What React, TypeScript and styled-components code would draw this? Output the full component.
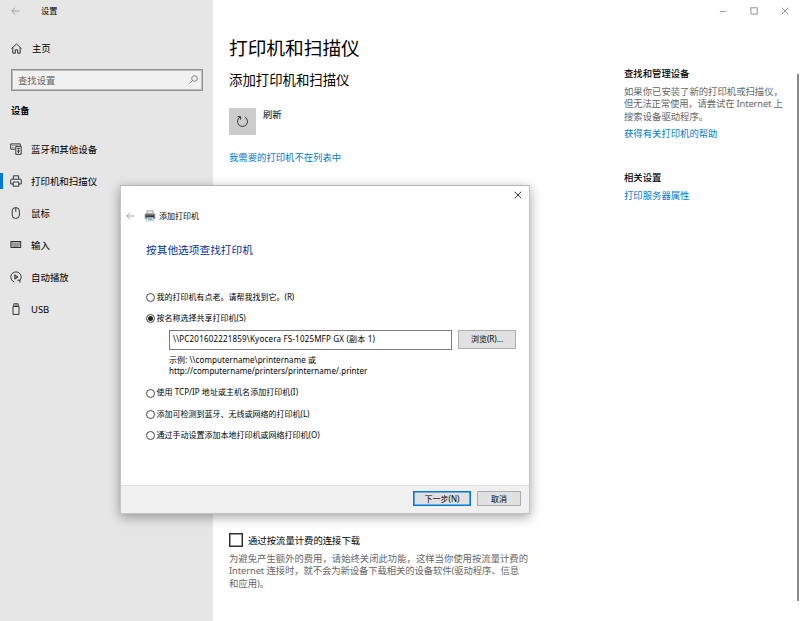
import React from "react";
import styled, { createGlobalStyle } from "styled-components";

const GlobalStyle = createGlobalStyle`
  * { box-sizing: border-box; }
  body {
    margin: 0;
    background: #fff;
    overflow: hidden;
    font-family: "Noto Sans", "Noto Sans CJK SC", sans-serif;
    color: #000;
  }
  p, h1, h2, h3 { margin: 0; font-weight: 400; }
`;

const Window = styled.div`
  position: relative;
  display: flex;
  width: 800px;
  height: 621px;
  overflow: hidden;
`;

/* ---------- sidebar ---------- */
const Sidebar = styled.aside`
  width: 213px;
  flex: none;
  background: #e6e6e6;
`;

const TitleBar = styled.div`
  display: flex;
  align-items: center;
  height: 22px;
  padding-left: 11px;
  gap: 21px;
  font-size: 8.2px;
  line-height: 12px;
`;

const HomeLink = styled.div`
  display: flex;
  align-items: center;
  gap: 10px;
  height: 20px;
  margin: 16px 0 0 11px;
  font-size: 9.35px;
`;

const SearchBox = styled.div`
  display: flex;
  align-items: center;
  justify-content: space-between;
  width: 192px;
  height: 22px;
  margin: 11px 0 0 11px;
  padding: 0 4px 1px 6px;
  border: 1px solid #909090;
  box-shadow: inset 0 0 0 1px #bdbdbd;
  background: #f1f1f1;
  font-size: 9.35px;
  color: #666;
`;

const SidebarHeading = styled.h2`
  margin: 12px 0 14px 11px;
  font-size: 9.3px;
  line-height: 16px;
  font-weight: 700;
`;

const NavItem = styled.div<{ $active?: boolean }>`
  display: flex;
  align-items: center;
  height: 32px;
  font-size: 9.45px;
  &::before {
    content: "";
    width: 3px;
    height: 16px;
    margin-right: 7px;
    background: ${(p) => (p.$active ? "#0078d7" : "transparent")};
  }
  svg { margin-right: 9px; }
`;

/* ---------- main area ---------- */
const Main = styled.main`
  flex: 1;
  display: flex;
  flex-direction: column;
`;

const WindowControls = styled.div`
  display: flex;
  justify-content: flex-end;
  gap: 23px;
  height: 22px;
  padding: 7px 11px 0 0;
`;

const Columns = styled.div`
  display: flex;
  flex: 1;
`;

const Content = styled.section`
  width: 395px;
  padding: 12px 0 0 16px;
`;

const PageTitle = styled.h1`
  font-size: 18.7px;
  line-height: 28px;
`;

const Subtitle = styled.h2`
  margin-top: 8px;
  font-size: 13.4px;
  line-height: 20px;
`;

const RefreshRow = styled.div`
  display: flex;
  gap: 7px;
  margin-top: 18px;
  font-size: 9.3px;
  line-height: 14px;
`;

const RefreshButton = styled.div`
  display: flex;
  align-items: center;
  justify-content: center;
  width: 27px;
  height: 27px;
  background: #ccc;
`;

const Link = styled.p`
  font-size: 9.35px;
  line-height: 14px;
  color: #0078d7;
`;

const MissingPrinterLink = styled(Link)`
  margin-top: 16px;
`;

const CheckRow = styled.div`
  display: flex;
  align-items: center;
  gap: 5px;
  height: 14px;
  margin-top: 368px;
  font-size: 9.35px;
`;

const Checkbox = styled.span`
  width: 14px;
  height: 14px;
  border: 1px solid #333;
  box-shadow: inset 0 0 0 0.5px #333;
`;

const Note = styled.p`
  font-size: 9.35px;
  line-height: 12.4px;
  color: #666;
  white-space: nowrap;
`;

const CheckNote = styled(Note)`
  margin-top: 6px;
`;

const Aside = styled.aside`
  width: 174px;
  padding: 45px 0 0 16px;
`;

const AsideTitle = styled.h3`
  font-size: 9.35px;
  line-height: 14px;
  font-weight: 500;
`;

const AsideNote = styled(Note)`
  margin: 5px 0 4px;
`;

const RelatedTitle = styled(AsideTitle)`
  margin: 30px 0 4px;
`;

const Scrollbar = styled.div`
  width: 2px;
  height: 527px;
  margin: 52px 1px 0 auto;
  background: #8a8a8a;
`;

const Run = styled.span<{ $ls: number }>`
  letter-spacing: ${(p) => p.$ls}px;
`;

/* ---------- dialog ---------- */
const Dialog = styled.div`
  position: absolute;
  left: 120px;
  top: 185px;
  width: 410px;
  height: 329px;
  display: flex;
  flex-direction: column;
  background: #fff;
  border: 1px solid #c4c4c4;
  border-top-color: #b5b5b5;
  box-shadow: 0 3px 11px rgba(0, 0, 0, 0.36);
  font-size: 8px;
  line-height: 12px;
  white-space: nowrap;
`;

const DialogClose = styled.div`
  display: flex;
  justify-content: flex-end;
  height: 23px;
  padding: 5px 7px 0 0;
`;

const DialogHeader = styled.div`
  display: flex;
  align-items: center;
  height: 14px;
  padding-left: 5px;
`;

const DialogTitle = styled.span`
  margin-left: 3px;
`;

const DialogHeading = styled.h2`
  margin: 19px 0 0 25px;
  font-size: 10.7px;
  line-height: 16px;
  color: #003399;
`;

const Options = styled.div`
  flex: 1;
  padding: 28px 0 0 25px;
`;

const Option = styled.div`
  display: flex;
  align-items: center;
  gap: 1.5px;
  height: 21.3px;
`;

const Radio = styled.span<{ $checked?: boolean }>`
  display: flex;
  align-items: center;
  justify-content: center;
  width: 9px;
  height: 9px;
  margin-top: 2px;
  border: 1px solid #444;
  border-radius: 50%;
  &::after {
    content: "";
    width: 5px;
    height: 5px;
    border-radius: 50%;
    background: ${(p) => (p.$checked ? "#222" : "transparent")};
  }
`;

const PathRow = styled.div`
  display: flex;
  gap: 6px;
  margin: 1px 0 0 23px;
`;

const PathInput = styled.div`
  width: 283px;
  height: 20px;
  padding: 2px 3px;
  border: 1px solid #7a7a7a;
`;

const Button = styled.div<{ $w: number; $h: number; $primary?: boolean }>`
  display: flex;
  align-items: center;
  justify-content: center;
  width: ${(p) => p.$w}px;
  height: ${(p) => p.$h}px;
  border: 1px solid ${(p) => (p.$primary ? "#0078d7" : "#adadad")};
  box-shadow: ${(p) => (p.$primary ? "inset 0 0 0 0.6px #0078d7" : "none")};
  background: #e1e1e1;
`;

const Example = styled.div`
  margin: 4px 0 5px 23px;
  line-height: 11.5px;
`;

const DialogFooter = styled.div`
  display: flex;
  justify-content: flex-end;
  gap: 6px;
  height: 28px;
  padding: 5px 8px 0 0;
  border-top: 1px solid #dfdfdf;
  background: #f0f0f0;
`;

/* ---------- icons ---------- */
const Icon = styled.svg`
  flex: none;
  fill: none;
  stroke: #222;
  stroke-width: 0.9;
`;

const BackArrow = () => (
  <Icon width="9" height="8" viewBox="0 0 9 8">
    <path d="M8.5 4H.8M4 .7.7 4 4 7.3" stroke="#999" />
  </Icon>
);

const HomeIcon = () => (
  <Icon width="11" height="11" viewBox="0 0 11 11">
    <path d="M.5 5.6 5.5 1l5 4.6M1.8 4.6v5.6h2.5V6.8h2.4v3.4h2.5V4.6" />
  </Icon>
);

const SearchIcon = () => (
  <Icon width="9" height="9" viewBox="0 0 9 9">
    <circle cx="5.5" cy="3.5" r="2.8" stroke="#777" />
    <path d="M3.5 5.5.5 8.5" stroke="#777" />
  </Icon>
);

const DevicesIcon = () => (
  <Icon width="12" height="12" viewBox="0 0 12 12">
    <path d="M5.3 6.2H.7V.9h9.6v2" />
    <path d="M2 2.5h6M2 4.4h2.4" stroke="#777" strokeDasharray="1.2 .5" />
    <path d="M5.8 3.4h5.4v7.9H5.8zM7.2 5.4h2.6M8.5 6.4v3.6M7.2 8h2.6" />
  </Icon>
);

const PrinterIcon = () => (
  <Icon width="12" height="12" viewBox="0 0 12 12">
    <path d="M3.4 4V.8h5.2V4M3.2 9H.7V5q0-.8.8-.8h9q.8 0 .8.8v4H8.8M3.2 7h5.6v4.2H3.2z" />
  </Icon>
);

const MouseIcon = () => (
  <Icon width="12" height="12" viewBox="0 0 12 12">
    <rect x="2.2" y=".6" width="7.2" height="10.8" rx="3.4" />
    <path d="M5.8.6v4.2" />
  </Icon>
);

const KeyboardIcon = () => (
  <Icon width="12" height="12" viewBox="0 0 12 12">
    <rect x=".9" y="2.5" width="9.8" height="6" fill="#b5b5b5" />
    <path d="M2 4.2h8M2 5.7h8" stroke="#666" strokeWidth=".7" strokeDasharray="1 .6" />
    <path d="M3.2 7.1h5.2" stroke="#666" strokeWidth=".7" />
  </Icon>
);

const AutoplayIcon = () => (
  <Icon width="12" height="12" viewBox="0 0 12 12">
    <path d="M4.3 11A5.2 5.2 0 1 1 9.6 9.8M7.3 9.2h2.6v2.4" />
    <path d="M4.8 3.8v4.4L8 6z" fill="#999" />
  </Icon>
);

const UsbIcon = () => (
  <Icon width="12" height="12" viewBox="0 0 12 12">
    <path d="M3.8 3.5V.8h4.4v2.7M3 3.5h6v7.9H3zM5.2 2.3h1.6" />
  </Icon>
);

const RefreshIcon = () => (
  <Icon width="13" height="13" viewBox="0 0 13 13">
    <path d="M4.2 2A5 5 0 1 0 8.8 2M1.6 1.6h2.9v2.9" />
  </Icon>
);

const CloseIcon = ({ color = "#888" }: { color?: string }) => (
  <Icon width="8" height="8" viewBox="0 0 8 8">
    <path d="m.7.7 6.6 6.6M7.3.7.7 7.3" stroke={color} />
  </Icon>
);

const MinimizeIcon = () => (
  <Icon width="8" height="8" viewBox="0 0 8 8">
    <path d="M.8 4.5h6.6" stroke="#999" />
  </Icon>
);

const MaximizeIcon = () => (
  <Icon width="8" height="8" viewBox="0 0 8 8">
    <rect x=".9" y=".8" width="6.3" height="6.3" stroke="#888" />
  </Icon>
);

const PrinterArt = styled.svg`
  flex: none;
  margin-left: 9px;
`;

const PrinterBadge = () => (
  <PrinterArt width="12" height="12" viewBox="0 0 12 12">
    <path d="M3 .8h6V4H3z" fill="#eee" stroke="#888" strokeWidth=".7" />
    <rect x=".7" y="3.6" width="10.6" height="5.4" rx="1.2" fill="#808386" />
    <rect x="2" y="5.4" width="8" height="1.7" fill="#33383b" />
    <path d="M3 7.6h6l.8 3.4H2.2z" fill="#e8f2f6" stroke="#999" strokeWidth=".5" />
    <path d="M4 8.5h4.2v1.2H4z" fill="#2a9fc4" />
  </PrinterArt>
);

const NAV = [
  { label: "蓝牙和其他设备", icon: <DevicesIcon /> },
  { label: "打印机和扫描仪", icon: <PrinterIcon />, active: true },
  { label: "鼠标", icon: <MouseIcon /> },
  { label: "输入", icon: <KeyboardIcon /> },
  { label: "自动播放", icon: <AutoplayIcon /> },
  { label: "USB", icon: <UsbIcon /> },
];

export default function App() {
  return (
    <Window>
      <GlobalStyle />
      <Sidebar>
        <TitleBar>
          <BackArrow />
          <span>设置</span>
        </TitleBar>
        <HomeLink>
          <HomeIcon />
          <span>主页</span>
        </HomeLink>
        <SearchBox>
          <span>查找设置</span>
          <SearchIcon />
        </SearchBox>
        <SidebarHeading>设备</SidebarHeading>
        {NAV.map((n) => (
          <NavItem key={n.label} $active={n.active}>
            {n.icon}
            <span>{n.label}</span>
          </NavItem>
        ))}
      </Sidebar>

      <Main>
        <WindowControls>
          <MinimizeIcon />
          <MaximizeIcon />
          <CloseIcon />
        </WindowControls>
        <Columns>
          <Content>
            <PageTitle>打印机和扫描仪</PageTitle>
            <Subtitle>添加打印机和扫描仪</Subtitle>
            <RefreshRow>
              <RefreshButton>
                <RefreshIcon />
              </RefreshButton>
              <span>刷新</span>
            </RefreshRow>
            <MissingPrinterLink>我需要的打印机不在列表中</MissingPrinterLink>
            <CheckRow>
              <Checkbox />
              <span>通过按流量计费的连接下载</span>
            </CheckRow>
            <CheckNote>
              为避免产生额外的费用，请始终关闭此功能，这样当你使用按流量计费的
              <br />
              <Run $ls={-0.09}>Internet 连接时，就不会为新设备下载相关的设备软件(驱动程序、信息</Run>
              <br />
              和应用)。
            </CheckNote>
          </Content>
          <Aside>
            <AsideTitle>查找和管理设备</AsideTitle>
            <AsideNote>
              如果你已安装了新的打印机或扫描仪，
              <br />
              <Run $ls={-0.15}>但无法正常使用，请尝试在 Internet 上</Run>
              <br />
              搜索设备驱动程序。
            </AsideNote>
            <Link>获得有关打印机的帮助</Link>
            <RelatedTitle>相关设置</RelatedTitle>
            <Link>打印服务器属性</Link>
          </Aside>
          <Scrollbar />
        </Columns>
      </Main>

      <Dialog>
        <DialogClose>
          <CloseIcon color="#222" />
        </DialogClose>
        <DialogHeader>
          <BackArrow />
          <PrinterBadge />
          <DialogTitle>添加打印机</DialogTitle>
        </DialogHeader>
        <DialogHeading>按其他选项查找打印机</DialogHeading>
        <Options>
          <Option>
            <Radio />
            <span>我的打印机有点老。请帮我找到它。(R)</span>
          </Option>
          <Option>
            <Radio $checked />
            <span>按名称选择共享打印机(S)</span>
          </Option>
          <PathRow>
            <PathInput>
              <Run $ls={0.19}>\\PC201602221859\Kyocera FS-1025MFP GX (副本 1)</Run>
            </PathInput>
            <Button $w={58} $h={19}>
              浏览(R)...
            </Button>
          </PathRow>
          <Example>
            <Run $ls={0.07}>示例: \\computername\printername 或</Run>
            <br />
            <Run $ls={0.05}>http://computername/printers/printername/.printer</Run>
          </Example>
          <Option>
            <Radio />
            <Run $ls={0.05}>使用 TCP/IP 地址或主机名添加打印机(I)</Run>
          </Option>
          <Option>
            <Radio />
            <span>添加可检测到蓝牙、无线或网络的打印机(L)</span>
          </Option>
          <Option>
            <Radio />
            <span>通过手动设置添加本地打印机或网络打印机(O)</span>
          </Option>
        </Options>
        <DialogFooter>
          <Button $w={58} $h={15} $primary>
            下一步(N)
          </Button>
          <Button $w={44} $h={15}>
            取消
          </Button>
        </DialogFooter>
      </Dialog>
    </Window>
  );
}
